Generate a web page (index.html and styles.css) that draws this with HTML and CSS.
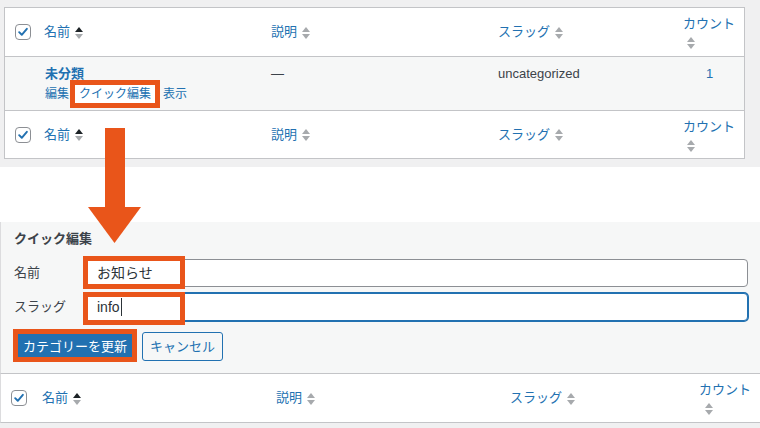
FILE: index.html
```html
<!DOCTYPE html>
<html lang="ja">
<head>
<meta charset="utf-8">
<title>カテゴリー</title>
<link rel="stylesheet" href="styles.css">
</head>
<body>
<svg class="defs" width="0" height="0" aria-hidden="true">
  <symbol id="sort-asc" viewBox="0 0 8 13"><polygon points="0,6 4,1 8,6" fill="#1d2327"/><polygon points="0,8 8,8 4,13" fill="#a7aaad"/></symbol>
  <symbol id="sort-none" viewBox="0 0 8 13"><polygon points="0,6 4,1 8,6" fill="#a7aaad"/><polygon points="0,8 8,8 4,13" fill="#a7aaad"/></symbol>
  <symbol id="check" viewBox="0 0 16 16"><path d="M3.6 8.2 L6.6 11.2 L12.4 4.4" fill="none" stroke="#2271b1" stroke-width="2.2" stroke-linecap="round" stroke-linejoin="round"/></symbol>
</svg>

<section class="top">
  <div class="table">
    <div class="row head">
      <div class="cell check"><span class="cb"><svg><use href="#check"/></svg></span></div>
      <div class="cell"><a class="sort">名前<svg class="arr"><use href="#sort-asc"/></svg></a></div>
      <div class="cell"><a class="sort">説明<svg class="arr"><use href="#sort-none"/></svg></a></div>
      <div class="cell"><a class="sort">スラッグ<svg class="arr"><use href="#sort-none"/></svg></a></div>
      <div class="cell"><a class="sort stack">カウント<svg class="arr"><use href="#sort-none"/></svg></a></div>
    </div>
    <div class="row item">
      <div class="cell check"></div>
      <div class="cell name">
        <a class="title">未分類</a>
        <div class="actions"><a>編集</a><a class="hl">クイック編集</a><a>表示</a></div>
      </div>
      <div class="cell text">—</div>
      <div class="cell text">uncategorized</div>
      <div class="cell num"><a>1</a></div>
    </div>
    <div class="row foot">
      <div class="cell check"><span class="cb"><svg><use href="#check"/></svg></span></div>
      <div class="cell"><a class="sort">名前<svg class="arr"><use href="#sort-asc"/></svg></a></div>
      <div class="cell"><a class="sort">説明<svg class="arr"><use href="#sort-none"/></svg></a></div>
      <div class="cell"><a class="sort">スラッグ<svg class="arr"><use href="#sort-none"/></svg></a></div>
      <div class="cell"><a class="sort stack">カウント<svg class="arr"><use href="#sort-none"/></svg></a></div>
    </div>
  </div>
</section>

<div class="gap"></div>

<section class="quick">
  <h2 class="qtitle">クイック編集</h2>
  <div class="fields">
    <label class="field">
      <span class="label">名前</span>
      <span class="wrap"><span class="input">お知らせ</span><span class="mark mark-name"></span></span>
    </label>
    <label class="field">
      <span class="label">スラッグ</span>
      <span class="wrap"><span class="input focus">info<span class="caret"></span></span><span class="mark mark-slug"></span></span>
    </label>
  </div>
  <div class="buttons">
    <span class="wrap"><button class="btn primary">カテゴリーを更新</button><span class="mark mark-btn"></span></span>
    <button class="btn secondary">キャンセル</button>
  </div>
</section>

<div class="row bottom">
  <div class="cell check"><span class="cb"><svg><use href="#check"/></svg></span></div>
  <div class="cell"><a class="sort">名前<svg class="arr"><use href="#sort-asc"/></svg></a></div>
  <div class="cell"><a class="sort">説明<svg class="arr"><use href="#sort-none"/></svg></a></div>
  <div class="cell"><a class="sort">スラッグ<svg class="arr"><use href="#sort-none"/></svg></a></div>
  <div class="cell"><a class="sort stack">カウント<svg class="arr"><use href="#sort-none"/></svg></a></div>
</div>

<svg class="arrow" width="53" height="116" viewBox="0 0 53 116" aria-hidden="true">
  <rect x="17" y="0" width="20" height="80" fill="#e9551a"/>
  <polygon points="0,79 53,79 26.5,115" fill="#e9551a"/>
</svg>
</body>
</html>
```

FILE: styles.css
```css
* { box-sizing: border-box; }

html, body { margin: 0; padding: 0; }

body {
  position: relative;
  width: 760px;
  height: 428px;
  overflow: hidden;
  background: #f0f0f1;
  font-family: "Liberation Sans", "Noto Sans CJK JP", sans-serif;
  font-size: 13px;
  line-height: 18px;
  color: #3c434a;
}

.defs { position: absolute; width: 0; height: 0; overflow: hidden; }

a { color: #2271b1; text-decoration: none; }

/* ---------- top table ---------- */
.top {
  height: 167px;
  padding: 7px 0 0 4px;
}

.table {
  width: 741px;
  background: #fff;
  border: 1px solid #c3c4c7;
}

.row {
  display: grid;
  grid-template-columns: 39px 227px 227px 185px 1fr;
  align-items: center;
}

.row.head { height: 49px; border-bottom: 1px solid #c3c4c7; }
.row.item {
  height: 54px;
  border-bottom: 1px solid #c3c4c7;
  background: #f6f7f7;
  align-items: start;
  padding-top: 8px;
}
.row.foot { height: 47px; }

.cell.check { padding-left: 10px; display: flex; align-items: center; }

.cb {
  display: block;
  width: 16px;
  height: 16px;
  border: 1px solid #8c8f94;
  border-radius: 4px;
  background: #fff;
}
.cb svg { display: block; width: 14px; height: 14px; }

.sort {
  display: inline-flex;
  align-items: center;
  gap: 5px;
  white-space: nowrap;
}
.sort.stack {
  flex-direction: column;
  align-items: flex-start;
  gap: 3px;
}
.sort.stack .arr { margin-left: 4px; }

.arr { display: block; width: 8px; height: 13px; }

.title { font-weight: bold; display: block; padding-left: 1px; }

.actions {
  display: flex;
  align-items: center;
  font-size: 12px;
  margin-top: 2px;
  padding-left: 1px;
}
.actions a { line-height: 18px; }
.actions .hl {
  background: #fff;
  border: 5px solid #e9551a;
  padding: 0 4px;
  margin: -5px 3px -5px 1px;
  line-height: 18px;
}

.cell.text { color: #3c434a; }
.cell.num { padding-left: 23px; }

/* ---------- gap ---------- */
.gap { height: 55px; background: #fff; }

/* ---------- quick edit ---------- */
.quick {
  height: 151px;
  background: #f6f7f7;
  border-left: 1px solid #dcdcde;
  padding: 8px 12px 12px 13px;
}

.qtitle {
  margin: 0;
  font-size: 13px;
  line-height: 18px;
  font-weight: bold;
  color: #3c434a;
}

.fields {
  margin-top: 11px;
  display: flex;
  flex-direction: column;
  gap: 6px;
}

.field {
  display: grid;
  grid-template-columns: 70px 1fr;
  align-items: center;
}

.label { color: #3c434a; }

.wrap { position: relative; display: block; }
.buttons .wrap { display: inline-block; }

.input {
  display: flex;
  align-items: center;
  height: 28px;
  padding: 0 12px;
  background: #fff;
  border: 1px solid #8c8f94;
  border-radius: 4px;
  font-size: 14px;
  color: #2c3338;
}
.input.focus {
  border-color: #2271b1;
  box-shadow: 0 0 0 1px #2271b1;
}

.caret {
  display: inline-block;
  width: 1px;
  height: 18px;
  margin-left: 1px;
  background: #2c3338;
}

.mark {
  position: absolute;
  border: 5px solid #e9551a;
  pointer-events: none;
}
.mark-name { left: -1px; top: -3px; width: 102px; height: 33px; }
.mark-slug { left: -1px; top: -1px; width: 102px; height: 33px; }
.mark-btn { left: -1px; top: -3px; width: 124px; height: 33px; }

.buttons {
  margin-top: 11px;
  display: flex;
  align-items: center;
  gap: 6px;
}

.btn {
  display: block;
  height: 29px;
  margin: 0;
  font-family: inherit;
  font-size: 13px;
  line-height: 18px;
  border-radius: 3px;
  border: 1px solid #2271b1;
  cursor: pointer;
}
.btn.primary {
  width: 122px;
  padding: 0;
  background: #2271b1;
  color: #fff;
}
.btn.secondary {
  width: 81px;
  padding: 0;
  background: #f6f7f7;
  color: #2271b1;
}

/* ---------- bottom header row ---------- */
.row.bottom {
  grid-template-columns: 41px 234px 234px 189px 1fr;
  height: 50px;
  background: #fff;
  border-top: 1px solid #c3c4c7;
  border-bottom: 1px solid #c3c4c7;
  border-left: 1px solid #dcdcde;
}
.row.bottom .cell.check { padding-left: 10px; }
.row.bottom .sort.stack .arr { margin-left: 6px; }

/* ---------- annotation arrow ---------- */
.arrow {
  position: absolute;
  left: 88px;
  top: 128px;
  z-index: 2;
}
```
